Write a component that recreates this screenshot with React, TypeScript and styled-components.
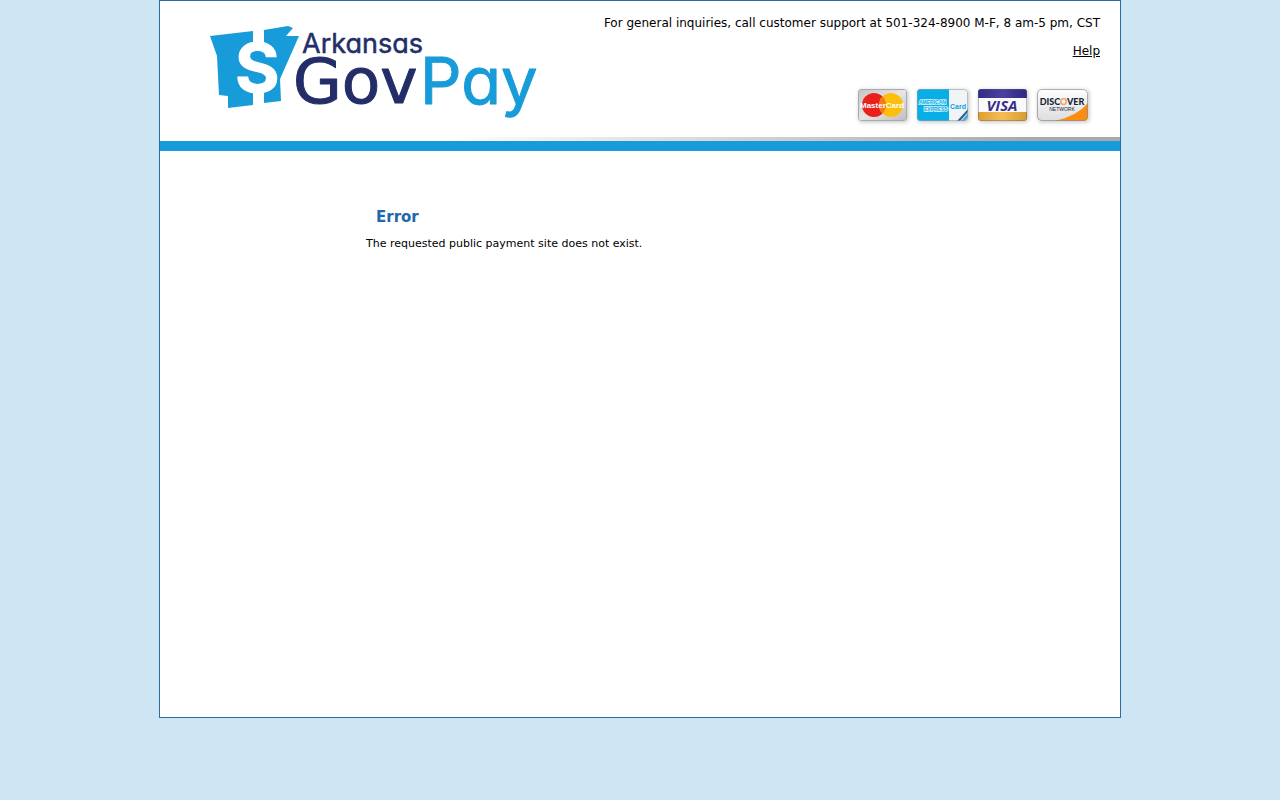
import React from "react";
import styled, { createGlobalStyle } from "styled-components";

const blue = "#189bd9";
const navy = "#232e68";

const GlobalStyle = createGlobalStyle`
  body {
    margin: 0;
    background: #cee6f4;
    color: #000;
    font: 11px/16px "DejaVu Sans", Verdana, sans-serif;
  }
`;

const Page = styled.div`
  box-sizing: border-box;
  max-width: 962px;
  min-height: 718px;
  margin: 0 auto;
  background: #fff;
  border: 1px solid #2a6ba0;
`;

const Header = styled.header`
  display: flex;
  justify-content: space-between;
  gap: 20px;
  padding: 14px 20px 14px 48px;
`;

const Brand = styled.a`
  display: block;
  padding-top: 8px;
  text-decoration: none;

  svg {
    display: block;
  }
`;

const LogoLetters = styled.g`
  font-family: Inter, sans-serif;
  font-feature-settings: "cv11";
  stroke-linejoin: round;
`;

const Support = styled.div`
  display: flex;
  flex-direction: column;
  align-items: flex-end;
  gap: 12px;
  font-size: 12px;
`;

const Inquiries = styled.p`
  margin: 0;
`;

const HelpLink = styled.a`
  color: #000;
`;

const Cards = styled.ul`
  display: flex;
  gap: 10px;
  margin: 18px 12px 2px 0;
  padding: 0;
  list-style: none;
`;

const CardItem = styled.li`
  svg {
    display: block;
    border-radius: 3px;
    box-shadow: 1px 1px 4px rgba(0, 0, 0, 0.25);
  }
`;

const Divider = styled.div`
  height: 10px;
  background: ${blue};
  border-top: 4px solid;
  border-image: linear-gradient(to right, #fff 30%, #aaa 90%) 1;
`;

const Main = styled.main`
  padding: 56px 20px 20px 206px;
`;

const Title = styled.h1`
  margin: 0 0 9px;
  padding-left: 10px;
  color: #2167ae;
  font-size: 15px;
  line-height: 20px;
`;

const Message = styled.p`
  margin: 0;
`;

function Logo() {
  return (
    <svg width="340" height="100" viewBox="208 23 340 100" role="img" aria-label="Arkansas GovPay">
      <path
        fill={blue}
        d="M210 36 253 31V45H264V30L288 26 293 28 286 36H299L280 79 281 101 264 103V85H253V105L228 108V96L219 95 217 56Z"
      />
      <LogoLetters>
        <text x="235" y="92" fill="#fff" stroke="#fff" strokeWidth="1" fontSize="68" fontWeight="700">S</text>
        <text x="302" y="53" fill={navy} stroke={navy} strokeWidth="0.5" fontSize="27">Arkansas</text>
        <text x="293" y="103" fill={navy} stroke={navy} strokeWidth="1" fontSize="63" fontFamily="DejaVu Sans, sans-serif">Gov</text>
        <text x="420" y="104" fill={blue} stroke={blue} strokeWidth="1" fontSize="65">Pay</text>
      </LogoLetters>
    </svg>
  );
}

function MasterCard() {
  return (
    <svg width="49" height="32" viewBox="0 0 49 32" role="img" aria-label="MasterCard">
      <defs>
        <linearGradient id="silver" x2="1" y2="1">
          <stop stopColor="#c4c4c6" />
          <stop offset=".5" stopColor="#e6e6e6" />
          <stop offset="1" stopColor="#bdbdbf" />
        </linearGradient>
      </defs>
      <rect x=".5" y=".5" width="48" height="31" rx="2" fill="url(#silver)" stroke="#aaa" />
      <circle cx="16" cy="16" r="12" fill="#e8201e" />
      <circle cx="33" cy="16" r="12" fill="#fdbf0c" />
      <path d="M24.500 7.500A12 12 0 0 1 24.500 24.500 12 12 0 0 1 24.500 7.500Z" fill="#f47a1c" />
      <text x="24" y="19" textAnchor="middle" fill="#fff" fontFamily="Liberation Sans, sans-serif" fontSize="8" fontWeight="700">MasterCard</text>
    </svg>
  );
}

function AmericanExpress() {
  return (
    <svg width="51" height="32" viewBox="0 0 51 32" role="img" aria-label="American Express">
      <rect width="51" height="32" rx="3" fill="#f1f4f6" />
      <path d="M3 0H32V32H3Q0 32 0 29V3Q0 0 3 0Z" fill="#08aee6" />
      <g fontFamily="Liberation Sans, sans-serif" fontWeight="700">
        <g fill="#08aee6" stroke="#d9f3fc" strokeWidth="1.500" paintOrder="stroke" fontSize="5">
          <text x="2" y="15">AMERICAN</text>
          <text x="7" y="22">EXPRESS</text>
        </g>
        <text x="33" y="20" fill="#08a4dc" fontSize="7">Card</text>
      </g>
      <path d="M40 32 51 20V23L43 32Z" fill="#235f92" />
      <path d="M43 32 51 23V29Q51 32 48 32Z" fill="#8cc7e0" />
      <path d="M46 32 51 26" stroke="#33749f" />
      <rect x=".5" y=".5" width="50" height="31" rx="3" fill="none" stroke="#899da8" strokeOpacity=".6" />
    </svg>
  );
}

function Visa() {
  return (
    <svg width="49" height="32" viewBox="0 0 49 32" role="img" aria-label="Visa">
      <defs>
        <linearGradient id="visaBlue">
          <stop stopColor="#312c86" />
          <stop offset=".5" stopColor="#4b429e" />
          <stop offset="1" stopColor="#2d2880" />
        </linearGradient>
        <linearGradient id="visaGold">
          <stop stopColor="#dda02f" />
          <stop offset=".5" stopColor="#f3bd58" />
          <stop offset="1" stopColor="#d99a2c" />
        </linearGradient>
      </defs>
      <rect width="49" height="32" fill="#fafafa" />
      <rect width="49" height="9" fill="url(#visaBlue)" />
      <rect y="23" width="49" height="9" fill="url(#visaGold)" />
      <text x="24" y="22" textAnchor="middle" fill="#37318a" fontFamily="Open Sans, sans-serif" fontSize="15" fontWeight="700" fontStyle="italic">VISA</text>
      <rect x=".5" y=".5" width="48" height="31" rx="2" fill="none" stroke="#655a63" strokeOpacity=".4" />
    </svg>
  );
}

function Discover() {
  return (
    <svg width="51" height="32" viewBox="0 0 51 32" role="img" aria-label="Discover Network">
      <defs>
        <linearGradient id="discoverGrey" x2="0" y2="1">
          <stop stopColor="#fff" />
          <stop offset="1" stopColor="#dcdddf" />
        </linearGradient>
      </defs>
      <rect width="51" height="32" rx="4" fill="url(#discoverGrey)" />
      <path d="M18 32Q40 27 51 14V28Q51 32 47 32Z" fill="#fb8c14" />
      <g textAnchor="middle" fill="#172536">
        <text x="25" y="16" fontFamily="Lato, sans-serif" fontSize="9" fontWeight="900">
          DISC<tspan fill="#f79a55">O</tspan>VER
        </text>
        <text x="25" y="22" fontFamily="Liberation Sans, sans-serif" fontSize="5">NETWORK</text>
      </g>
      <rect x=".5" y=".5" width="50" height="31" rx="4" fill="none" stroke="#8b8b8b" strokeOpacity=".7" />
    </svg>
  );
}

export default function App() {
  return (
    <>
      <GlobalStyle />
      <Page>
        <Header>
          <Brand href="#">
            <Logo />
          </Brand>
          <Support>
            <Inquiries>
              For general inquiries, call customer support at 501-324-8900 M-F, 8 am-5 pm, CST
            </Inquiries>
            <HelpLink href="#help">Help</HelpLink>
            <Cards>
              <CardItem><MasterCard /></CardItem>
              <CardItem><AmericanExpress /></CardItem>
              <CardItem><Visa /></CardItem>
              <CardItem><Discover /></CardItem>
            </Cards>
          </Support>
        </Header>
        <Divider />
        <Main>
          <Title>Error</Title>
          <Message>The requested public payment site does not exist.</Message>
        </Main>
      </Page>
    </>
  );
}
